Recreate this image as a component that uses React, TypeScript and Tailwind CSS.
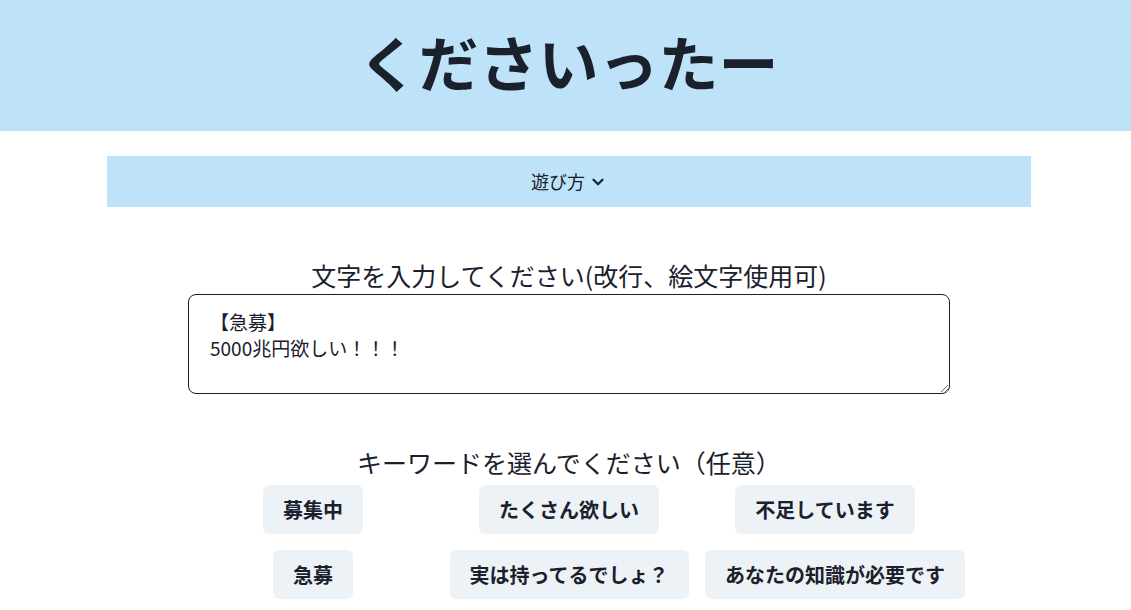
import { ChevronDown } from 'lucide-react';

const keywords = ['募集中', 'たくさん欲しい', '不足しています', '急募', '実は持ってるでしょ？', 'あなたの知識が必要です'];

export default function App() {
  return (
    <div className="min-h-[610px] bg-white text-[#1a202c] font-['Noto_Sans_CJK_JP','Noto_Sans',sans-serif]">
      <header className="h-[131px] bg-[#bee3f8] flex items-center justify-center">
        <h1 className="text-[60px] font-bold leading-none pl-[6px] -mt-[10px]">くださいったー</h1>
      </header>

      <div className="ml-[107px] w-[924px] mt-[25px]">
        <button className="w-full h-[51px] bg-[#bee3f8] flex items-center justify-center gap-1 text-[18px]">
          遊び方
          <ChevronDown size={18} strokeWidth={3} />
        </button>

        <div className="flex flex-col items-center mt-[50px]">
          <label className="text-[25px] leading-[36px]">文字を入力してください(改行、絵文字使用可)</label>
          <textarea
            className="mt-[1px] w-[762px] h-[100px] border border-[#1a202c] rounded-lg px-[21px] pt-[14px] text-[19px] leading-[26px] outline-none"
            defaultValue={'【急募】\n5000兆円欲しい！！！'}
          />

          <label className="mt-[50px] text-[25px] leading-[36px]">キーワードを選んでください（任意）</label>
          <div className="mt-[5px] w-[752px] grid grid-cols-3 gap-4">
            {keywords.map((k, i) => (
              <div key={i}>
                <button className="block mx-auto w-fit h-[49px] px-5 rounded-md bg-[#edf2f7] text-[20px] font-bold whitespace-nowrap">
                  {k}
                </button>
              </div>
            ))}
          </div>
        </div>
      </div>
    </div>
  );
}
